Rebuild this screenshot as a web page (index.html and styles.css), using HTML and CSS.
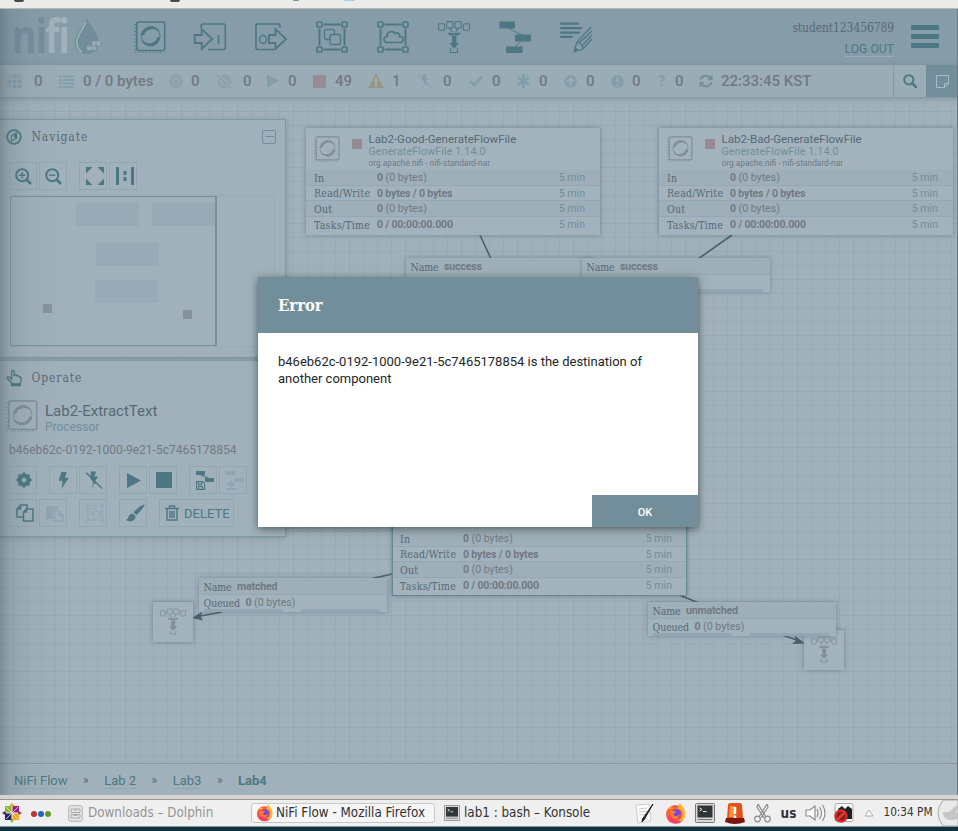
FILE: index.html
```html
<!DOCTYPE html>
<html lang="en">
<head>
<meta charset="utf-8">
<title>NiFi Flow</title>
<link rel="stylesheet" href="styles.css">
</head>
<body>
<svg class="defs" width="0" height="0">
  <symbol id="processor" viewBox="0 0 32 32"><path d="M1 3v28.600h29" fill="none" stroke="currentColor" stroke-width="1.600" stroke-dasharray="1 2.600"/><rect x="2.700" y="1" width="28" height="28.400" rx="2" fill="none" stroke="currentColor" stroke-width="1.500"/><circle cx="16.700" cy="15.200" r="9.300" fill="none" stroke="currentColor" stroke-width=".9"/><path d="M7.300 13.500C9 8 12.500 5.200 17 5.200c4.500 0 7.500 2.500 9 6.300-1-.5-1.500-1-2-1.300-2-1.700-4.500-2.400-7-2-4 .4-6 3-6.500 5-.3 1.200-2.500 1.500-3.200.3zM26.100 16.900C24.400 22.400 20.900 25.200 16.400 25.200c-4.500 0-7.500-2.500-9-6.300 1 .5 1.500 1 2 1.300 2 1.700 4.500 2.400 7 2 4-.4 6-3 6.500-5 .3-1.200 2.500-1.500 3.200-.3z" fill="currentColor"/></symbol>
  <symbol id="group" viewBox="0 0 32 32"><g fill="none" stroke="currentColor" stroke-width="1.900"><path d="M7.500 3.500h17M7.500 28.500h17M3.500 7.500v17M28.500 7.500v17"/><g fill="var(--bg)" stroke-width="1.700"><rect x="1" y="1" width="5" height="5" rx="1"/><rect x="26" y="1" width="5" height="5" rx="1"/><rect x="1" y="26" width="5" height="5" rx="1"/><rect x="26" y="26" width="5" height="5" rx="1"/></g></g></symbol>
  <symbol id="pair" viewBox="0 0 32 32"><g fill="var(--bg)" stroke="currentColor" stroke-width="1.300"><rect x="8.500" y="8.500" width="10" height="10" rx="2"/><rect x="14" y="13.500" width="10.500" height="10" rx="2"/></g></symbol>
  <symbol id="funnel" viewBox="0 0 32 32"><g fill="none" stroke="currentColor" stroke-width="1.050"><rect x=".6" y="2.700" width="6" height="6.500" rx="1"/><rect x="8.600" y=".6" width="6.300" height="6.500" rx="1"/><rect x="17" y=".6" width="6.300" height="6.500" rx="1"/><rect x="25.500" y="2.700" width="6" height="6.500" rx="1"/><path d="M12 7.500l2.500 4M20 7.500L17.500 11.500M12.500 27v4.500h7V27"/></g><path d="M10 11.500c4 1 8 1 12 0v1.500c-1.500 2-10.500 2-12 0zM14 15h4.500v7h2.700l-5 5.500-5-5.500H14z" fill="currentColor"/></symbol>
  <symbol id="template" viewBox="0 0 32 32"><path d="M1 .5h14.500q.5 0 .5.500v6q0 .5-.5.500H1q-.5 0-.5-.5V1q0-.5.500-.5zM16 13.500h16v7H16zM7 25.500h16.500v7H7z" fill="currentColor"/><path d="M9 7l14 7M22 20l-6 6" stroke="currentColor" fill="none"/></symbol>
  <symbol id="bolt" viewBox="0 0 16 16"><path d="M6 0h5L9.300 5.300H13L6 16l1.300-7.800H3.500z" fill="currentColor"/></symbol>
  <symbol id="boltoff" viewBox="0 0 18 18"><path d="M6 0h5L9.500 5H13l-3 5 2 2-2 .5-1-1L7 18l1-8-2.500-2.500L5.500 5z" fill="currentColor"/><path d="M1 1l16 16" stroke="currentColor" stroke-width="1.400"/></symbol>
  <symbol id="firefox" viewBox="0 0 20 20"><circle cx="10" cy="11" r="9" fill="#ff5b3b"/><path d="M2 6C4 5 5 3 8 5L12 6 14 0c5 5 7 10 4 15-2 3-5 4-8 3 7-2 9-9 4-12-4-1-7-1-12 0z" fill="#ffb82e"/><path d="M4 16c3 4 9 4 12 1-5 1-9-1-12-6-1 2-1 4 0 5z" fill="#fa397a"/><circle cx="10.500" cy="10.500" r="4.600" fill="#7542e5"/><path d="M5 7l6 1-3 3c2 3 5 1 6-1 0 4-3 6-6 5s-4-5-3-8z" fill="#ff802c"/></symbol>
  <symbol id="konsole" viewBox="0 0 20 20"><rect x=".5" y=".5" width="19" height="19" rx="1" fill="#d9d9d8" stroke="#77797a"/><path d="M2.500 2.500h15v12h-15z" fill="#303537"/><path d="M3 16.500h14" stroke="#777"/><path d="M4.500 5l2.500 1.500L4.500 8M8 8.500h3.500" fill="none" stroke="#eee"/></symbol>
</svg>
<div class="chrome"><i class="t1"></i><i class="t2"></i><i class="t3"></i><i class="t4"></i></div>
<div class="app">
  <header class="header">
    <div class="logo"><span class="n">ni</span><span class="f">fi</span>
      <svg width="27" height="37" viewBox="0 0 27 37"><path d="M13 0C17 9 25 16 25 24c0 7-5 12-12 12S1 31 1 24C1 16 9 9 13 0z" fill="#728d9a"/><path d="M12 4C9 12 2 18 3 25c0 4 2 7 5 9" fill="none" stroke="#a2b3bc" stroke-width="1.500"/><path d="M18 23h8v5h-4v5h-9v-5h5z" fill="#9aadb7"/><path d="M18 23v13M22 22v12M13 28h12M12 32.500h11" stroke="#7a929f"/></svg></div>
    <div class="tools">
      <svg><use href="#processor"/></svg>
      <svg viewBox="0 0 32 32"><path d="M7 7V5q0-2 2-2h21q1.300 0 1.300 2v22q0 1.500-1.300 1.500H14M24.500 14v9.500" fill="none" stroke="currentColor" stroke-width="1.600"/><path d="M1 15h7V9l10.500 10L8 29v-6H1z" transform="translate(-.3 -1)" fill="none" stroke="currentColor" stroke-width="1.800"/></svg>
      <svg viewBox="0 0 32 32"><path d="M25 7V5q0-2-2-2H3Q1 3 1 5v22q0 1.500 2 1.500h16" fill="none" stroke="currentColor" stroke-width="1.600"/><ellipse cx="8" cy="18.500" rx="3.500" ry="4" fill="none" stroke="currentColor" stroke-width="1.500"/><path d="M14 14h6.500V8L31 18 20.500 28v-6H14z" fill="none" stroke="currentColor" stroke-width="1.800"/></svg>
      <svg><use href="#group"/><use href="#pair"/></svg>
      <svg viewBox="0 0 32 32"><use href="#group"/><path d="M10 21.500c-4 0-4-6 0-6 0-5 6-6.500 8-3 3-1.500 5 .5 4.500 3 5-.5 5 6 0 6z" fill="none" stroke="currentColor" stroke-width="1.700"/></svg>
      <svg><use href="#funnel"/></svg>
      <svg><use href="#template"/></svg>
      <svg viewBox="0 0 32 32"><path d="M1 2.700h17M1 7.200h20M1 11.600h18M1 15.800h11" stroke="currentColor" stroke-width="2.200" stroke-linecap="round"/><path d="M14 31l3-10L31 6M14 31l9-3 9-10M19 22L32 10M22 25l10-11M17 21c2 0 5 3 6 6" fill="none" stroke="currentColor" stroke-width="1.200"/><path d="M14 31l1.200-5 3.500 3.500z" fill="currentColor"/></svg>
    </div>
    <div class="user"><span class="slab uname">student123456789</span><a class="logout">LOG OUT</a></div>
    <div class="burger"><b></b><b></b><b></b></div>
  </header>
  <div class="status">
    <div class="counts">
      <svg width="15" height="15" viewBox="0 0 15 15"><g fill="currentColor"><circle cx="7.500" cy="2.500" r="2.100"/><circle cx="2.500" cy="7.500" r="2.100"/><circle cx="7.500" cy="7.500" r="2.100"/><circle cx="12.500" cy="7.500" r="2.100"/><circle cx="7.500" cy="12.500" r="2.100"/><circle cx="12.500" cy="12.500" r="2.100"/></g><g fill="none" stroke="currentColor"><circle cx="2.500" cy="2.500" r="1.800"/><circle cx="12.500" cy="2.500" r="1.800"/><circle cx="2.500" cy="12.500" r="1.800"/></g></svg><span>0</span>
      <svg width="15" height="13" viewBox="0 0 15 13"><path d="M0 1.500h3M4 1.500h11M0 5h3M4 5h11M0 8.500h3M4 8.500h11M0 12h3M4 12h11" stroke="currentColor" stroke-width="2"/></svg><span>0 / 0 bytes</span>
      <svg width="14" height="14" viewBox="0 0 14 14"><g fill="none" stroke="currentColor" stroke-width="1.300"><circle cx="7" cy="7" r="6"/><circle cx="7" cy="7" r="3.700"/></g><circle cx="7" cy="7" r="2" fill="currentColor"/></svg><span>0</span>
      <svg width="15" height="15" viewBox="0 0 15 15"><g fill="none" stroke="currentColor" stroke-width="1.300"><circle cx="7.500" cy="7.500" r="6"/><circle cx="7.500" cy="7.500" r="3.500"/><path d="M0 1l14 13" stroke="#9aacb5" stroke-width="4"/><path d="M0 1l14 13"/></g></svg><span>0</span>
      <svg width="12" height="14" viewBox="0 0 12 14"><path d="M0 .5l12 6.500-12 6.500z" fill="currentColor"/></svg><span>0</span>
      <svg width="13" height="13" class="red"><path d="M0 0h13v13H0z" fill="currentColor"/></svg><span>49</span>
      <svg width="16" height="14" viewBox="0 0 16 14" class="warn"><path d="M8 0l8 14H0z" fill="currentColor"/><path d="M8 4.500v4.800M8 10.500v2" stroke="#a5b4b9" stroke-width="2"/></svg><span>1</span>
      <svg width="14" height="15"><use href="#boltoff"/></svg><span>0</span>
      <svg width="14" height="12" viewBox="0 0 14 12"><path d="M1 6l4 4 8-8.500" fill="none" stroke="currentColor" stroke-width="2.800"/></svg><span>0</span>
      <svg width="13" height="14" viewBox="0 0 13 14"><path d="M6.500 0v14M.8 3.500l11.400 7M.8 10.500l11.400-7" stroke="currentColor" stroke-width="3"/></svg><span>0</span>
      <svg width="13" height="13" viewBox="0 0 13 13"><circle cx="6.500" cy="6.500" r="6.300" fill="currentColor"/><path d="M6.500 11V3M3 6.500L6.500 3 10 6.500" fill="none" stroke="#9aacb5" stroke-width="1.900"/></svg><span>0</span>
      <svg width="13" height="13" viewBox="0 0 13 13"><circle cx="6.500" cy="6.500" r="6.300" fill="currentColor"/><path d="M6.500 2v5.500M6.500 9v2" stroke="#9aacb5" stroke-width="2"/></svg><span>0</span>
      <em>?</em><span>0</span>
      <svg width="14" height="14" viewBox="0 0 14 14" class="refresh"><path d="M1.500 5.500C3 1 9 .5 11.500 4M12.500 8.500C11 13 5 13.500 2.500 10" fill="none" stroke="currentColor" stroke-width="2"/><path d="M13.500.5v5.500H8.500zM.5 13.500V8h5z" fill="currentColor"/></svg><span>22:33:45 KST</span>
    </div>
    <div class="search"><svg width="14" height="14" viewBox="0 0 14 14"><circle cx="5.800" cy="5.800" r="4.600" fill="none" stroke="currentColor" stroke-width="2"/><path d="M9.300 9.300L13 13" stroke="currentColor" stroke-width="2.600" stroke-linecap="round"/></svg></div>
    <div class="bulletin"><svg width="13" height="13" viewBox="0 0 13 13"><path d="M.5.500h12v8l-4 4h-8zM12.500 8.500h-4v4" fill="none" stroke="currentColor"/></svg></div>
  </div>
  <main class="canvas">
    <svg class="wires" width="958" height="666" viewBox="0 98 958 666"><path d="M480 235l11 24M732 235l-34 24M392 574l-20 4.500M222 612l-24 4.500M679 595l20 8M782 635l18 6" /><path class="head" d="M192 618l10.500-6.500-2 5 2.500 4zM805 643.500l-10.500-8 1.500 5-4 3.500z"/></svg>

    <section class="proc p1">
      <div class="phead"><svg class="picon"><use href="#processor"/></svg><i class="stop"></i><div><h3>Lab2-Good-GenerateFlowFile</h3><h4>GenerateFlowFile 1.14.0</h4><h5>org.apache.nifi - nifi-standard-nar</h5></div></div>
      <div class="row"><span class="slab">In</span><p><b>0</b> (0 bytes)</p><time>5 min</time></div>
      <div class="row"><span class="slab">Read/Write</span><p><b>0 bytes / 0 bytes</b></p><time>5 min</time></div>
      <div class="row"><span class="slab">Out</span><p><b>0</b> (0 bytes)</p><time>5 min</time></div>
      <div class="row"><span class="slab">Tasks/Time</span><p><b>0 / 00:00:00.000</b></p><time>5 min</time></div>
    </section>
    <section class="proc p2">
      <div class="phead"><svg class="picon"><use href="#processor"/></svg><i class="stop"></i><div><h3>Lab2-Bad-GenerateFlowFile</h3><h4>GenerateFlowFile 1.14.0</h4><h5>org.apache.nifi - nifi-standard-nar</h5></div></div>
      <div class="row"><span class="slab">In</span><p><b>0</b> (0 bytes)</p><time>5 min</time></div>
      <div class="row"><span class="slab">Read/Write</span><p><b>0 bytes / 0 bytes</b></p><time>5 min</time></div>
      <div class="row"><span class="slab">Out</span><p><b>0</b> (0 bytes)</p><time>5 min</time></div>
      <div class="row"><span class="slab">Tasks/Time</span><p><b>0 / 00:00:00.000</b></p><time>5 min</time></div>
    </section>
    <section class="proc p3">
      <div class="phead"></div>
      <div class="row"><span class="slab">In</span><p><b>0</b> (0 bytes)</p><time>5 min</time></div>
      <div class="row"><span class="slab">Read/Write</span><p><b>0 bytes / 0 bytes</b></p><time>5 min</time></div>
      <div class="row"><span class="slab">Out</span><p><b>0</b> (0 bytes)</p><time>5 min</time></div>
      <div class="row"><span class="slab">Tasks/Time</span><p><b>0 / 00:00:00.000</b></p><time>5 min</time></div>
    </section>

    <div class="funnel f1"><svg width="26" height="27"><use href="#funnel"/></svg></div>
    <div class="funnel f2"><svg width="26" height="27"><use href="#funnel"/></svg></div>

    <div class="conn c1"><div><span class="slab">Name</span><b>success</b></div></div>
    <div class="conn c2"><div><span class="slab">Name</span><b>success</b></div><div></div><footer><i></i><i></i></footer></div>
    <div class="conn c3"><div><span class="slab">Name</span><b>matched</b></div><div><span class="slab">Queued</span><p><b>0</b> (0 bytes)</p></div><footer><i></i><i></i></footer></div>
    <div class="conn c4"><div><span class="slab">Name</span><b>unmatched</b></div><div><span class="slab">Queued</span><p><b>0</b> (0 bytes)</p></div><footer><i></i><i></i></footer></div>

    <aside class="side">
      <section class="panel nav">
        <div class="ptitle"><svg width="16" height="16" viewBox="0 0 16 16"><circle cx="8" cy="8" r="6.800" fill="none" stroke="currentColor" stroke-width="1.800"/><path d="M5.500 6.500L10.500 4v5.500l-5 2.500z" fill="none" stroke="currentColor" stroke-width="1.200"/><path d="M8 5.300L10.500 4v5.500L8 8.500z" fill="currentColor"/></svg><span class="slab">Navigate</span><i class="collapse"></i></div>
        <div class="btns">
          <button><svg width="17" height="17" viewBox="0 0 17 17"><circle cx="7.200" cy="7.200" r="6" fill="none" stroke="currentColor" stroke-width="2"/><path d="M4 7.200h6.400M7.200 4v6.400" stroke="currentColor" stroke-width="1.400"/><path d="M11.500 11.500l4.500 4.500" stroke="currentColor" stroke-width="2.600"/></svg></button>
          <button class="g"><svg width="17" height="17" viewBox="0 0 17 17"><circle cx="7.200" cy="7.200" r="6" fill="none" stroke="currentColor" stroke-width="2"/><path d="M4 7.200h6.400" stroke="currentColor" stroke-width="1.400"/><path d="M11.500 11.500l4.500 4.500" stroke="currentColor" stroke-width="2.600"/></svg></button>
          <button class="wide"><svg width="18" height="18" viewBox="0 0 18 18"><path d="M0 0h6.500L0 6.500zM18 0v6.500L11.500 0zM0 18v-6.500L6.500 18zM18 18h-6.500l6.500-6.500z" fill="currentColor"/></svg></button>
          <button class="g wide"><svg width="18" height="18" viewBox="0 0 18 18"><path d="M1.500 0v18M16.500 0v18M9 4v4M9 10v4" stroke="currentColor" stroke-width="3"/></svg></button>
        </div>
        <div class="birdseye"><svg width="264" height="151" viewBox="10 195 264 151"><g fill="#98aab6"><path d="M76 203h63v23H76zM152 203h64v23h-64zM96 243h63v23H96zM95 280h63v23H95z"/></g><path d="M43 304h9v9h-9zM183 310h9v9h-9z" fill="#87939c"/><path d="M10.500 345.500v-149H216M10.500 345.500H216" fill="none" stroke="#7592a0"/><path d="M216 196v150" stroke="#7592a0" stroke-width="2"/></svg></div>
      </section>
      <section class="panel op">
        <div class="ptitle"><svg width="16" height="18" viewBox="0 0 17 18"><path d="M6 14L1.500 9.500C.5 8 2 7 3.500 8L6 10V2.200C6 .5 8.700.5 8.700 2.200V6c1.500-.7 2.500-.2 3 .7 1.300-.3 2 .2 2.300 1 1.500 0 2 .8 2 2V12l-1 3v2H6z" fill="none" stroke="currentColor" stroke-width="1.500"/><path d="M6 14.500h9V17H6z" fill="currentColor"/></svg><span class="slab">Operate</span></div>
        <div class="sel"><svg width="32" height="32"><use href="#processor"/></svg><div><h2>Lab2-ExtractText</h2><h6>Processor</h6></div></div>
        <div class="uid">b46eb62c-0192-1000-9e21-5c7465178854</div>
        <div class="btns">
          <button><svg width="16" height="16" viewBox="0 0 16 16"><circle cx="8" cy="8" r="4.300" fill="none" stroke="currentColor" stroke-width="4"/><path d="M8 .5v3M8 12.500v3M.5 8h3M12.500 8h3M2.700 2.700l2 2M11.300 11.300l2 2M2.700 13.300l2-2M11.300 4.700l2-2" stroke="currentColor" stroke-width="3"/></svg></button>
          <button class="left"><svg width="17" height="17"><use href="#bolt"/></svg></button>
          <button class="g"><svg width="18" height="19"><use href="#boltoff"/></svg></button>
          <button><svg width="14" height="15" viewBox="0 0 14 15"><path d="M0 0l14 7.500L0 15z" fill="currentColor"/></svg></button>
          <button class="g"><svg width="16" height="16"><path d="M0 0h16v16H0z" fill="currentColor"/></svg></button>
          <button class="wide"><svg width="18" height="19" viewBox="0 0 18 19"><path d="M0 0h9v4H0zM9 7h9v4H9z" fill="currentColor"/><path d="M5 4l7 3M.6 10.600h6l2 2v5.800h-8zM2.500 10.600v3h3v-3M2.500 18v-2.500h4V18" fill="none" stroke="currentColor" stroke-width="1.100"/></svg></button>
          <button class="g off wide"><svg width="18" height="19" viewBox="0 0 18 19"><path d="M0 0h9v4H0zM9 7h9v4H9zM5 9l5 5H7v2H3v-2H0zM0 17h10v2H0z" fill="currentColor"/></svg></button>
        </div>
        <div class="btns second">
          <button class="wide"><svg width="18" height="18" viewBox="0 0 18 18"><path d="M4.500 1H11v12H1V5zM4.500 1v4H1" fill="none" stroke="currentColor" stroke-width="1.500"/><path d="M10.500 5H17v12H7.500V8zM10.500 5v3h-3" fill="var(--bg)" stroke="currentColor" stroke-width="1.500"/></svg></button>
          <button class="g off wide"><svg width="18" height="17" viewBox="0 0 18 17"><path d="M0 1h12v4H7v9H0z" fill="currentColor"/><path d="M8.500 6.500H13l4 4V16H8.500zM13 6.500v4h4" fill="var(--bg)" stroke="currentColor" stroke-width="1.500"/></svg></button>
          <button class="off wide"><svg width="18" height="18"><use href="#group"/><use href="#pair"/></svg></button>
          <button class="wide"><svg width="19" height="18" viewBox="0 0 19 18"><path d="M18.500.5c1 1-5 8-8 10.500L7.500 8.500C10 5 17.500-.5 18.500.5zM6.500 9.500l3 2.500c0 5-5 7-9.500 4 3-1 2-6 6.500-6.500z" fill="currentColor"/></svg></button>
          <button class="del"><svg width="14" height="16" viewBox="0 0 14 16"><path d="M0 3.500h14M4.500 3V1h5v2M2 4v11h10V4M5 6v7M7 6v7M9 6v7" fill="none" stroke="currentColor" stroke-width="1.400"/></svg>DELETE</button>
        </div>
      </section>
    </aside>
  </main>
  <nav class="crumbs"><a>NiFi Flow</a><i>»</i><a>Lab 2</a><i>»</i><a>Lab3</a><i>»</i><strong>Lab4</strong></nav>
  <div class="dialog">
    <div class="dhead slab">Error</div>
    <div class="dbody">b46eb62c-0192-1000-9e21-5c7465178854 is the destination of another component</div>
    <div class="dfoot"><button>OK</button></div>
  </div>
</div>
<footer class="taskbar">
  <svg width="20" height="20" viewBox="0 0 20 20"><path d="M20 10l-4 2.500v-5z" fill="#9a3a8a"/><path d="M10 0l2.500 3h-5z" fill="#e9a21d"/><path d="M10 20l-2.500-4h5z" fill="#8ab52b"/><path d="M0 10l4-2.500v5z" fill="#352a6c"/><path d="M3 3h6.500v6.500H3z" fill="#8bbb2c"/><path d="M10.500 3H17v6.500h-6.500z" fill="#9b1e79"/><path d="M3 10.500h6.500V17H3z" fill="#282567"/><path d="M10.500 10.500H17V17h-6.500z" fill="#efa81b"/><path d="M4 4l12 12M16 4L4 16" stroke="#e8ddea" stroke-width=".8"/></svg>
  <span class="dots"><i></i><i></i><i></i></span>
  <svg class="fm" width="15" height="17" viewBox="0 0 15 17"><rect x=".7" y=".7" width="13.600" height="15.600" rx="2" fill="#e5e5e5" stroke="#b5b5b5"/><path d="M3 4h9v3.500H3zM3 9.500h9V13H3zM5.500 5h4M5.500 10.500h4" fill="none" stroke="#aaa"/></svg>
  <span class="task dim">Downloads – Dolphin</span>
  <span class="task active"><svg width="17" height="18"><use href="#firefox"/></svg><b>NiFi Flow - Mozilla Firefox</b></span>
  <svg class="ks" width="16" height="16"><use href="#konsole"/></svg>
  <span class="task k">lab1 : bash – Konsole</span>
  <div class="tray">
    <svg width="20" height="21" viewBox="0 0 20 21"><path d="M1 2l13-1 2 17-13 2z" fill="#fafafa" stroke="#ccc"/><path d="M4 6l8-1M4 9l8-1M5 12l5-.5" stroke="#ccc"/><path d="M18 1L9 17l-2 2 .5-3z" fill="#222" stroke="#222"/></svg>
    <svg width="21" height="21"><use href="#firefox"/></svg>
    <svg width="20" height="20"><use href="#konsole"/></svg>
    <svg width="20" height="21" viewBox="0 0 20 21"><path d="M3 2q0-2 3-2h8q3 0 3 2l1 13H2z" fill="#e1531d"/><path d="M5 3h5v11H4z" fill="#f79143"/><path d="M1 15h18l1 4q-10 4-20 0z" fill="#7d170d"/><path d="M10 4v7M10 12.500v2.500" stroke="#fff" stroke-width="2.500"/></svg>
    <svg width="17" height="19" viewBox="0 0 17 19"><g fill="none" stroke="#8b8b8b" stroke-width="1.200"><circle cx="3.500" cy="15" r="2.800"/><circle cx="13.500" cy="15" r="2.800"/><path d="M5 13L13 0l1 3-7 11M12 13L4 0 3 3l7 11"/></g></svg>
    <strong>us</strong>
    <svg class="vol" width="22" height="20" viewBox="0 0 22 20"><path d="M1 7h4l5-4v14l-5-4H1zM12 6q2 4 0 8M14.500 4q4 6 0 12M17.500 2q5 8 0 16" fill="#fafafa" stroke="#8e8e8e" stroke-width="1.200"/></svg>
    <svg class="cam" width="20" height="20" viewBox="0 0 20 20"><rect x="1" y=".5" width="18" height="18" rx="2" fill="#f5f5f5" stroke="#aaa"/><path d="M4 6l4-3 3 3 3-3 4 3v10H6z" fill="#1d2325"/><circle cx="7" cy="13" r="5.500" fill="#801d1d" stroke="#d22c2c" stroke-width="2.400"/><path d="M3.500 16.500l7-7" stroke="#e33" stroke-width="2.500"/></svg>
    <svg width="10" height="8" viewBox="0 0 10 8"><path d="M5 1l4 6H1z" fill="#fff" stroke="#aaa"/></svg>
    <span class="clock">10:34 PM</span>
    <svg class="plasma" width="21" height="26" viewBox="0 0 21 26"><path d="M6 0q-10 13 0 26h15V0z" fill="#e9e9e9" stroke="#aaa"/><path d="M20 6c-5 0-4 8-14 6 0 10 12 9 15 6v-5c-3 0-4-3 0-3z" fill="#c5c5c5"/></svg>
  </div>
</footer>
<div class="desktop"></div>
</body>
</html>
```
FILE: styles.css
```css
* { box-sizing: border-box; }
body { margin: 0; width: 958px; height: 831px; overflow: hidden; font-family: Roboto, sans-serif; color: #717983; --bg: #a0b1bb; display: flex; flex-direction: column; }
.defs { position: absolute; }
svg { display: block; flex: none; }
i, em { font-style: normal; }
h2, h3, h4, h5, h6, p { margin: 0; font-weight: 400; }
.slab { font-family: "Roboto Slab", "DejaVu Serif Condensed", "DejaVu Serif", serif; font-stretch: condensed; color: #566974; }

.chrome { height: 9px; background: #ebebea; border-bottom: 1px solid #b8b9b1; display: flex; align-items: flex-start; }
.chrome i { height: 2px; background: #48494b; border-radius: 0 0 6px 6px; }
.chrome .t1 { width: 10px; margin-left: 14px; }
.chrome .t2 { width: 10px; margin-left: 146px; }
.chrome .t3 { width: 6px; margin-left: 113px; height: 1px; background: #7895a8; }
.chrome .t4 { width: 11px; margin-left: 45px; height: 1px; background: #a9cbe5; }

.app { position: relative; height: 786px; display: flex; flex-direction: column; background: #a0b1bb; }
.app::after { content: ""; position: absolute; inset: 0; pointer-events: none; border-right: 1px solid #70797e; background: linear-gradient(90deg, rgba(75,90,98,.42) 0, rgba(80,98,107,.2) 9px, rgba(80,98,107,.06) 28px, transparent 60px); }

.header { height: 56px; background: #869ca8; --bg: #869ca8; color: #4d7782; display: flex; align-items: center; flex: none; }
.logo { display: flex; align-items: center; width: 91px; margin-left: 12px; font: 700 46px/50px "Open Sans", Roboto, sans-serif; letter-spacing: -1px; height: 56px; }
.logo span { transform: scaleX(.81); transform-origin: 0 50%; margin-top: -4px; }
.logo .n { color: #758e9b; width: 33px; }
.logo .f { color: #a0b2bb; width: 29px; }
.logo svg { margin-top: -2px; }
.tools { display: flex; gap: 28.900px; margin-left: 30.500px; margin-top: -1px; }
.tools svg { width: 32px; height: 32px; overflow: visible; }
.user { width: 120px; margin-left: auto; margin-right: 17px; text-align: right; display: flex; flex-direction: column; align-items: flex-end; }
.uname { font-size: 12px; line-height: 20px; letter-spacing: -.1px; white-space: nowrap; }
.logout { font-size: 12.200px; line-height: 14px; margin-top: 4px; border-bottom: 1px solid #9aacb6; }
.burger { width: 28px; margin-right: 19px; margin-top: -2px; display: flex; flex-direction: column; gap: 4px; }
.burger b { height: 5px; border-radius: 1px; background: #4d7782; }

.status { height: 33px; background: #9aacb5; border-bottom: 1px solid #849ca9; display: flex; flex: none; position: relative; box-shadow: 0 1px 5px rgba(80,105,118,.4); }
.counts { flex: 1; display: grid; align-items: center; padding-left: 7px; grid-template-columns: 27px 25px 24px 86px 22px 26px 26px 24px 21px 25px 22px 33px 24px 26px 25px 26px 23px 25px 22px 25px 22px 25px 21px 26px 17px 24px 22px 1fr; color: #849daa; font-size: 15px; font-weight: 500; }
.counts svg { overflow: visible; }
.counts span { color: #717983; white-space: nowrap; }
.counts em { font-weight: 900; font-size: 14px; }
.red { color: #978b94; }
.warn { color: #949582; }
.refresh { color: #728e9b; }
.search { width: 33px; border-left: 1px solid #849ca9; color: #4d7782; display: grid; place-items: center; }
.bulletin { width: 32px; background: #728e9b; color: #a9bbc4; display: grid; place-items: center; }

.canvas { position: relative; flex: 1; overflow: hidden; background-image: linear-gradient(90deg, transparent 13px, #98aab5 13px), linear-gradient(transparent 13px, #98aab5 13px); background-size: 14px 14px; }
.wires { position: absolute; inset: 0; fill: none; stroke: #4c606b; stroke-width: 1.600; }
.wires .head { fill: #4c606b; stroke: none; }
.proc { position: absolute; width: 294px; height: 107px; background: #a2b3bd; box-shadow: 0 0 4px rgba(70,95,110,.6); }
.p1 { left: 306px; top: 30px; }
.p2 { left: 659px; top: 30px; }
.p3 { left: 392px; top: 391px; width: 295px; outline: 1.500px solid #638994; outline-offset: -1px; }
.phead { height: 42px; padding: 8px 0 0 8px; display: flex; align-items: flex-start; }
.picon { width: 26px; height: 26px; color: #818d97; }
.stop { width: 10px; height: 10px; background: #988a94; margin: 3px 6.500px 0 12px; }
h3 { font-size: 11.500px; line-height: 13px; margin-top: -3px; color: #566974; white-space: nowrap; }
h4 { font-size: 10.600px; line-height: 12px; color: #728e9b; letter-spacing: .15px; }
h5 { font-size: 8.300px; line-height: 11px; color: #717983; white-space: nowrap; }
.row { height: 15.500px; display: flex; align-items: center; padding: 1px 15px 0 8px; font-size: 10.600px; border-bottom: 1px solid #94a7b2; background: #a2b3bd; }
.row:nth-child(2), .row:nth-child(4) { background: #9eafb9; }
.row:last-child { border: 0; }
.row .slab { width: 63px; font-size: 10.500px; letter-spacing: .25px; }
.row b, .conn b { font-weight: 700; letter-spacing: -.2px; }
.row time { margin-left: auto; color: #728e9b; }

.funnel { position: absolute; width: 40px; height: 40px; padding: 6px 7px; background: #a2b3bd; box-shadow: 0 0 4px rgba(70,95,110,.6); border-radius: 1px; color: #818d97; }
.f1 { left: 153px; top: 504px; }
.f2 { left: 804px; top: 532px; }
.conn { position: absolute; width: 188px; height: 34px; background: #a2b3bd; box-shadow: 0 0 4px rgba(70,95,110,.5); font-size: 10.600px; }
.conn div { height: 15.500px; display: flex; align-items: center; padding-left: 4.500px; gap: 5.500px; }
.conn div:first-child { height: 17px; padding-top: 1px; border-bottom: 1px solid #94a7b2; background: #9eafb9; }
.conn .slab { font-size: 10.500px; letter-spacing: -.1px; }
.conn footer { display: flex; gap: 18px; padding-left: 5px; margin-top: -2px; }
.conn footer i { width: 79px; height: 3px; background: #94a6b1; }
.c1 { left: 406px; top: 160px; }
.c2 { left: 582px; top: 160px; }
.c3 { left: 199px; top: 480px; }
.c4 { left: 648px; top: 504px; }

.side { position: absolute; left: 0; top: 21px; width: 286px; display: flex; flex-direction: column; gap: 2px; }
.panel { background: #a0b1bb; border: solid #8198a5; border-width: 1px 1px 1px 0; box-shadow: 0 1px 5px rgba(80,105,118,.4); color: #4d7782; }
.nav { height: 239px; padding: 8px 9px 0 6px; }
.op { height: 177px; padding: 8px 9px 0 6px; }
.ptitle { display: flex; align-items: center; height: 17px; gap: 9.500px; font-size: 12px; }
.ptitle .slab { letter-spacing: .9px; }
.collapse { width: 14px; height: 14px; border: 1px solid #728e9b; border-radius: 2px; margin-left: auto; background: linear-gradient(#728e9b, #728e9b) center / 9px 1px no-repeat; }
.btns { display: flex; gap: 12px; padding-left: 3px; }
.btns .g { margin-left: -10px; }
.btns button { width: 28px; height: 28px; padding: 0 0 0 1px; border: 1px solid #93a7b2; background: transparent; display: grid; place-items: center; color: #4d7782; font: 400 13px Roboto; }
.btns .wide { padding-left: 4px; }
.btns .left { padding: 0; }
.nav .btns { margin-top: 17px; }
.btns .off { color: #8fa5b1; }
.second { margin-top: 5px; }
.btns button.del { width: 75px; display: flex; align-items: center; gap: 5px; padding-left: 5px; }
.birdseye { margin: 5px 0 0 4px; width: 265px; height: 152px; border: solid #97aab5; border-width: 1px 1px 1px 0; }
.birdseye svg { margin-top: -1px; }
.sel { display: flex; gap: 7px; margin-top: 14px; color: #818d97; }
h2 { font-size: 15px; line-height: 18px; color: #566974; margin-top: 2px; }
h6 { font-size: 12px; line-height: 15px; color: #728e9b; }
.uid { font-size: 12px; line-height: 15px; margin: 8px 0 8px 3px; color: #717983; white-space: nowrap; }

.crumbs { height: 32px; flex: none; border-top: 1px solid #8299a6; background: #a0b1bb; display: flex; align-items: center; gap: 15.500px; padding-left: 14px; font-size: 13px; color: #4d7782; position: relative; }
.crumbs a { border-bottom: 1px solid #8fa9b3; padding-top: 2px; }
.crumbs i { color: #566974; font-size: 12px; }
.crumbs strong { padding-top: 1px; }

.dialog { position: absolute; z-index: 3; left: 258px; top: 268px; width: 440px; height: 250px; background: #fff; box-shadow: 0 2px 8px rgba(0,0,0,.5); display: flex; flex-direction: column; }
.dhead { height: 56px; background: #728e9b; color: #fff; font-weight: 700; font-size: 16.500px; line-height: 58px; padding-left: 20px; }
.dbody { flex: 1; padding: 20px; font-size: 13px; line-height: 17px; color: #262626; }
.dfoot { display: flex; justify-content: flex-end; }
.dfoot button { width: 106px; height: 32px; border: 0; background: #728e9b; color: #fff; font: 500 11px Roboto; padding-top: 3px; }

.taskbar { height: 32px; flex: none; border-top: 4px solid #d5d2cf; border-bottom: 1px solid #8b9293; background: #efefef; box-shadow: inset 0 1px #969696; display: flex; align-items: center; padding: 1px 0 0 2px; font-family: "DejaVu Sans Condensed", "DejaVu Sans", sans-serif; font-stretch: condensed; font-size: 13.300px; color: #333; position: relative; }
.dots { display: flex; margin: 2px 17px 0 9px; gap: 1px; }
.dots i { width: 6px; height: 6px; border-radius: 3px; background: #b93434; }
.dots i:nth-child(2) { background: #2365b3; }
.dots i:nth-child(3) { background: #63992c; }
.task { white-space: nowrap; margin-top: -2px; }
.dim { color: #969696; width: 163px; margin-left: 5px; }
.active { width: 184px; height: 20px; margin-top: 0; border: 1px solid #c8c8c8; border-radius: 3px; background: #f6f6f6; display: flex; align-items: center; gap: 3px; padding-left: 4px; }
.active b { font-weight: 400; margin-top: -2px; }
.ks { margin: 0 4px 0 9px; }
.tray { position: relative; margin-left: auto; display: flex; align-items: center; gap: 9.500px; font-size: 11.700px; }
.tray strong { font-size: 13.500px; }
.vol { margin-left: -1px; }
.cam { margin-left: -2px; }
.clock { white-space: nowrap; margin-top: -2px; }
.plasma { margin-left: -5px; }
.desktop { height: 4px; background: #10303e; }
```
